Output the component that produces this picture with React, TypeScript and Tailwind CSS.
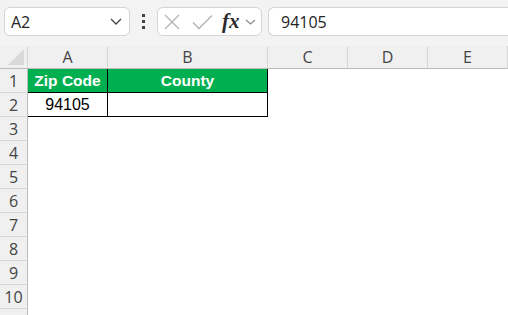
export default function App() {
  const cols = [
    { l: "A", w: "w-[80px]" },
    { l: "B", w: "w-[160px]" },
    { l: "C", w: "w-[80px]" },
    { l: "D", w: "w-[80px]" },
    { l: "E", w: "w-[80px]" },
  ];
  const rows = Array.from({ length: 11 }, (_, i) => i + 1);
  return (
    <div className="w-[508px] h-[315px] overflow-hidden bg-white font-['Open_Sans',sans-serif]">
      {/* toolbar */}
      <div className="h-[46px] bg-[#f3f3f3] flex items-start pt-[7px] pl-[4px]">
        <div className="w-[126px] h-[29px] shrink-0 bg-white border border-[#d4d4d4] rounded-[6px] flex items-center justify-between pl-[6px] pr-[7px]">
          <span className="text-[16px] leading-none text-[#242424]">A2</span>
          <svg width="12" height="7" viewBox="0 0 12 7" fill="none">
            <path d="M1 1l5 5 5-5" stroke="#424242" strokeWidth="1.3" />
          </svg>
        </div>
        <div className="w-[27px] h-[29px] shrink-0 flex flex-col items-center justify-center gap-[3px]">
          <span className="w-[3px] h-[3px] bg-[#424242]" />
          <span className="w-[3px] h-[3px] bg-[#424242]" />
          <span className="w-[3px] h-[3px] bg-[#424242]" />
        </div>
        <div className="w-[105px] h-[29px] shrink-0 bg-white border border-[#d4d4d4] rounded-[6px] flex items-center pl-[5px]">
          <svg width="18" height="18" viewBox="0 0 18 18" fill="none">
            <path d="M2 2l14 14M16 2L2 16" stroke="#b3b3b3" strokeWidth="1.3" />
          </svg>
          <svg className="ml-[11px]" width="21" height="16" viewBox="0 0 21 16" fill="none">
            <path d="M1 8.5l6 6L20 1.5" stroke="#b3b3b3" strokeWidth="1.3" />
          </svg>
          <span className="ml-[9px] font-['Liberation_Serif',serif] italic font-semibold text-[21px] leading-none text-[#2b2b2b]">fx</span>
          <svg className="ml-[5px]" width="11" height="6" viewBox="0 0 11 6" fill="none">
            <path d="M1 1l4.5 4 4.5-4" stroke="#8a8a8a" strokeWidth="1.2" />
          </svg>
        </div>
        <div className="ml-[6px] flex-1 h-[29px] bg-white border border-r-0 border-[#d4d4d4] rounded-l-[6px] pl-[12px] flex items-center">
          <span className="text-[16px] leading-none text-[#242424]">94105</span>
        </div>
      </div>
      {/* column headers */}
      <div className="flex h-[23px] bg-[#f0f0f0] border-b border-[#bcbcbc]">
        <div className="w-[28px] shrink-0 border-r border-[#d6d6d6]">
          <svg width="27" height="22" viewBox="0 0 27 22">
            <polygon points="24,3 24,19 8,19" fill="#d9d9d9" />
          </svg>
        </div>
        {cols.map((c) => (
          <div
            key={c.l}
            className={`${c.w} shrink-0 border-r border-[#d6d6d6] flex items-center justify-center text-[16px] leading-none text-[#444444]`}
          >
            {c.l}
          </div>
        ))}
      </div>
      {/* rows */}
      {rows.map((r) => (
        <div key={r} className="flex h-[24px]">
          <div className="w-[28px] shrink-0 bg-[#f0f0f0] border-r border-b border-r-[#bcbcbc] border-b-[#d6d6d6] flex items-center justify-center text-[16px] leading-none text-[#444444]">
            {r <= 10 ? r : ""}
          </div>
          {r === 1 ? (
            <>
              <div className="w-[80px] shrink-0 bg-[#00b050] border-r border-b border-black flex items-center justify-center font-['Liberation_Sans',sans-serif] font-bold text-[15.5px] text-white">
                Zip Code
              </div>
              <div className="w-[160px] shrink-0 bg-[#00b050] border-r border-b border-black flex items-center justify-center font-['Liberation_Sans',sans-serif] font-bold text-[15.5px] text-white">
                County
              </div>
            </>
          ) : r === 2 ? (
            <>
              <div className="w-[80px] shrink-0 border-r border-b border-black flex items-center justify-center font-['Liberation_Sans',sans-serif] text-[16px] text-black">
                94105
              </div>
              <div className="w-[160px] shrink-0 border-r border-b border-black" />
            </>
          ) : null}
        </div>
      ))}
    </div>
  );
}
